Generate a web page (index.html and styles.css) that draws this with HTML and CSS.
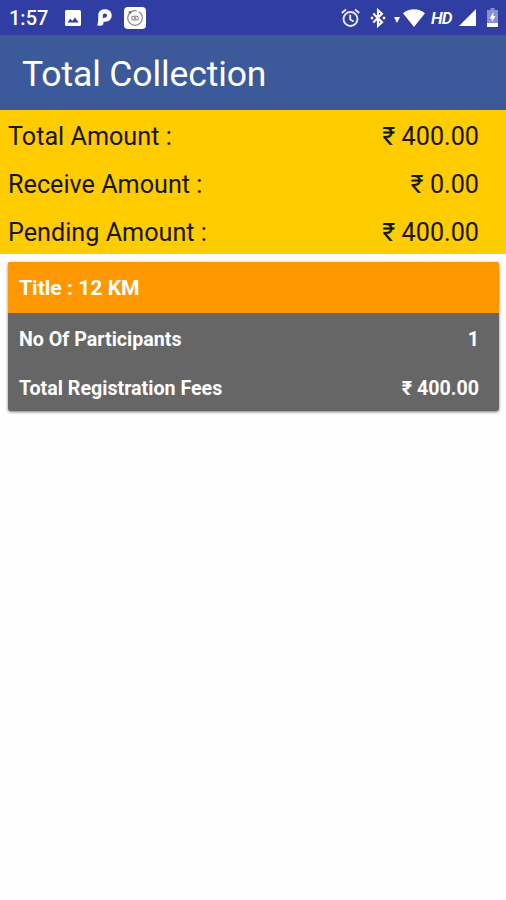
FILE: index.html
```html
<!DOCTYPE html>
<html lang="en">
<head>
<meta charset="utf-8">
<title>Total Collection</title>
<link rel="stylesheet" href="styles.css">
</head>
<body>
<div class="status-bar">
  <div class="status-left">
    <span class="clock">1:57</span>
    <svg class="icon-image" width="16" height="16" viewBox="0 0 16 16"><rect width="16" height="16" rx="1.5" fill="#fff"/><path d="M2.500 12.500 5.300 8.700 7.300 11 10 7.600 13.700 12.500Z" fill="#303da3"/></svg>
    <svg class="icon-p" width="15" height="17" viewBox="0 0 15 17"><path d="M.2 16.500 1.200 12V6.500C1.200 3 3.600 .3 8 .3 12 .3 14.700 2.800 14.700 6.500 14.700 10.200 12 12.700 8.300 12.700H6.500V14.200C6.300 16 5 16.700 3.500 16.700Z" fill="#fff"/><path d="M5.800 9.300V6.700C5.800 5.300 6.600 4.500 7.900 4.500 9.200 4.500 10 5.300 10 6.500 10 7.900 9.100 8.700 7.700 8.700H7Z" fill="#303da3"/></svg>
    <svg class="icon-camera" width="22" height="22" viewBox="0 0 22 22"><rect width="22" height="22" rx="4" fill="#fff"/><g fill="none" stroke="#85828c"><circle cx="11" cy="11" r="7.300" stroke-width="1.200" stroke-dasharray="36 2"/><rect x="7.800" y="9.300" width="6.400" height="3.600" rx="1.500" stroke-width="1.100"/><path d="M10 11.100h2" stroke-width="1.500"/></g><circle cx="6" cy="5.500" r="1.400" fill="#77747f"/></svg>
  </div>
  <div class="status-right">
    <svg class="icon-alarm" width="19" height="20" viewBox="0 0 19 20"><g fill="none" stroke="#e9ebff" stroke-width="1.900"><circle cx="9.500" cy="11" r="7"/><path d="M9.200 6.800v4.700l3.500 2M.8 5 5 1.500M14 1.500 18.200 5"/></g></svg>
    <svg class="icon-bluetooth" width="16" height="20" viewBox="0 0 16 20"><path d="M3.300 5.600 12 14.200 8 17.800V2.200L12 5.800 3.300 14.400" fill="none" stroke="#fff" stroke-width="2.100"/><path d="M.8 8.700h2.400v2.600H.8zM12.800 8.700h2.400v2.600h-2.400z" fill="#fff"/></svg>
    <svg class="icon-arrow" width="6" height="6" viewBox="0 0 6 6"><path d="M0 0h6L3 6Z" fill="#fff"/></svg>
    <svg class="icon-wifi" width="22" height="18" viewBox="0 0 22 18"><path d="M0 4.200C6.400-1.200 15.600-1.200 22 4.200L11 18Z" fill="#fff"/></svg>
    <span class="hd">HD</span>
    <svg class="icon-signal" width="17" height="17" viewBox="0 0 17 17"><path d="M17 0v17H0Z" fill="#fff"/></svg>
    <svg class="icon-battery" width="11" height="19" viewBox="0 0 11 19"><path d="M3.500 0h4v2H11v17H0V2h3.500Z" fill="#8990cf"/><path d="M0 15h11v4H0ZM6.500 4 2.600 10.500h2.200V14L8.500 8H6.300Z" fill="#fff"/></svg>
  </div>
</div>
<header class="app-bar"><h1>Total Collection</h1></header>
<section class="summary">
  <div class="summary-row"><span>Total Amount :</span><span>₹ 400.00</span></div>
  <div class="summary-row"><span>Receive Amount :</span><span>₹ 0.00</span></div>
  <div class="summary-row"><span>Pending Amount :</span><span>₹ 400.00</span></div>
</section>
<main>
  <article class="card">
    <h2>Title : 12 KM</h2>
    <div class="card-row"><span>No Of Participants</span><span>1</span></div>
    <div class="card-row"><span>Total Registration Fees</span><span>₹ 400.00</span></div>
  </article>
</main>
</body>
</html>
```

FILE: styles.css
```css
* { box-sizing: border-box; }
body { margin: 0; min-height: 900px; background: #fefefe; font-family: Roboto, "Noto Sans", sans-serif; }
svg { display: block; flex: none; }
.status-bar { height: 35px; padding: 0 8px 0 9px; background: #303da3; color: #fff; display: flex; justify-content: space-between; align-items: center; }
.status-left, .status-right { display: flex; align-items: center; }
.clock { width: 56px; font-size: 20px; font-weight: 500; }
.icon-p { margin-left: 16px; }
.icon-camera { margin-left: 12px; }
.icon-bluetooth { margin-left: 10px; }
.icon-arrow { margin: 4px 3px 0 8px; }
.hd { width: 34px; padding-left: 6px; font-size: 17px; font-style: italic; font-weight: 600; letter-spacing: -1px; }
.icon-signal { margin-right: 11px; }
.app-bar { height: 75px; padding: 4px 0 0 22px; background: #3c5a99; }
.app-bar h1 { margin: 0; color: #fff; font-size: 35.5px; font-weight: 400; line-height: 71px; letter-spacing: -0.12px; }
.summary { height: 144px; padding: 2px 27px 0 8px; background: #fc0; color: #191600; }
.summary-row { height: 48px; display: flex; justify-content: space-between; align-items: center; font-size: 25.2px; }
main { padding: 8px 7px 0 8px; }
.card { height: 149px; overflow: hidden; border-radius: 3px; background: #666; color: #fff; box-shadow: 0 1px 3px rgba(0,0,0,.55); }
.card h2 { height: 51px; margin: 0; padding: 1px 11px 0; background: #ff9800; font-size: 21.1px; font-weight: 700; line-height: 50px; }
.card-row { height: 49px; padding: 3px 20px 0 11px; display: flex; justify-content: space-between; align-items: center; font-size: 19.65px; font-weight: 700; }
```
